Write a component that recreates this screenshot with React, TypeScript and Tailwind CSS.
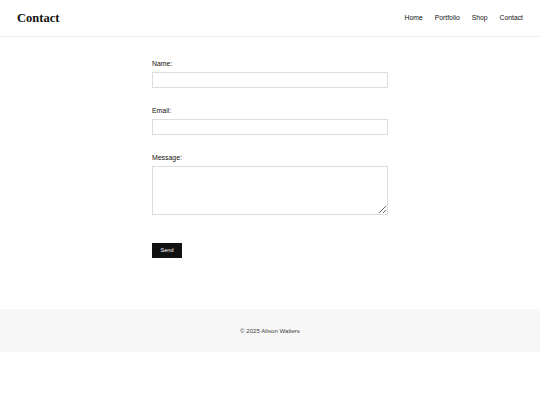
export default function App() {
  const links = ['Home', 'Portfolio', 'Shop', 'Contact'];

  return (
    <div className="min-h-[405px] bg-white font-['Liberation_Sans',Arial,sans-serif] text-[#111]">
      <header className="h-[37px] border-b border-[#eeeeee] flex items-center justify-between px-[17px]">
        <h1 className="font-['Liberation_Serif','Times_New_Roman',serif] font-bold text-[12.5px] leading-none text-[#111]">
          Contact
        </h1>
        <nav className="flex items-center gap-[12px] text-[6.8px] text-[#111]">
          {links.map((l) => (
            <a key={l} href="#" className="leading-none">
              {l}
            </a>
          ))}
        </nav>
      </header>

      <main className="pt-[23px] pb-[51px]">
        <form className="w-[236px] mx-auto" onSubmit={(e) => e.preventDefault()}>
          <div className="mb-[19px]">
            <label className="block text-[6.9px] leading-[8px] mb-[4px]">Name:</label>
            <input type="text" className="block w-full h-[16px] border border-[#dddddd] bg-white" />
          </div>
          <div className="mb-[19px]">
            <label className="block text-[6.9px] leading-[8px] mb-[4px]">Email:</label>
            <input type="email" className="block w-full h-[16px] border border-[#dddddd] bg-white" />
          </div>
          <div>
            <label className="block text-[6.9px] leading-[8px] mb-[4px]">Message:</label>
            <textarea className="block w-full h-[49px] border border-[#dddddd] bg-white" />
          </div>
          <button
            type="submit"
            className="block mt-[28px] w-[30px] h-[15px] bg-[#111111] text-white text-[5.6px] leading-none"
          >
            Send
          </button>
        </form>
      </main>

      <footer className="h-[43px] bg-[#f7f7f7] flex items-center justify-center">
        <p className="text-[6.1px] text-[#444444]">© 2025 Alison Walters</p>
      </footer>
    </div>
  );
}
